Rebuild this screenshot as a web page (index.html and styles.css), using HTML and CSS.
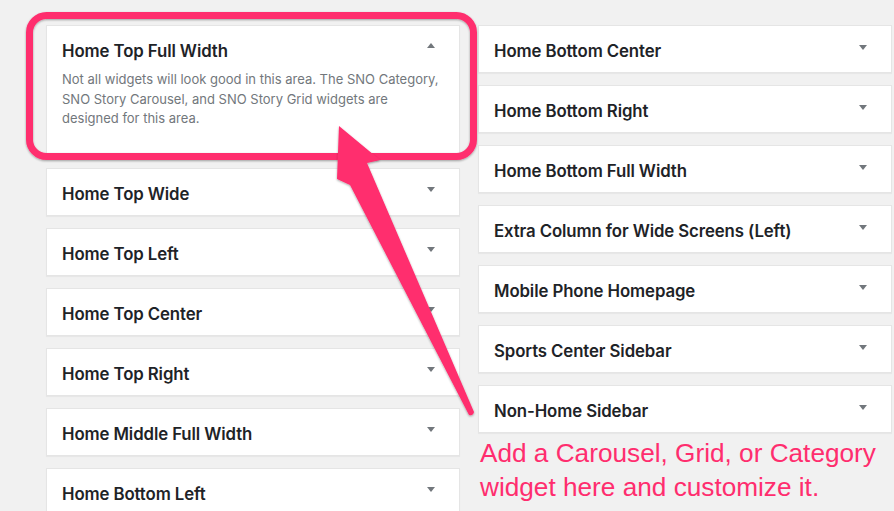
FILE: index.html
```html
<!DOCTYPE html>
<html>
<head>
    <title>Widget Areas</title>
    <meta charset="utf-8">
    <link rel="stylesheet" href="styles.css">
</head>
<body>
<div class="page">
    <div class="col">
        <div class="widget open">
            <div class="widget-top">
                <h3>Home Top Full Width</h3>
                <span class="toggle up"></span>
            </div>
            <p class="desc">Not all widgets will look good in this area. The SNO Category, SNO Story Carousel, and SNO Story Grid widgets are designed for this area.</p>
        </div>
        <div class="widget"><div class="widget-top"><h3>Home Top Wide</h3><span class="toggle"></span></div></div>
        <div class="widget"><div class="widget-top"><h3>Home Top Left</h3><span class="toggle"></span></div></div>
        <div class="widget"><div class="widget-top"><h3>Home Top Center</h3><span class="toggle"></span></div></div>
        <div class="widget"><div class="widget-top"><h3>Home Top Right</h3><span class="toggle"></span></div></div>
        <div class="widget"><div class="widget-top"><h3>Home Middle Full Width</h3><span class="toggle"></span></div></div>
        <div class="widget"><div class="widget-top"><h3>Home Bottom Left</h3><span class="toggle"></span></div></div>
    </div>
    <div class="col">
        <div class="widget"><div class="widget-top"><h3>Home Bottom Center</h3><span class="toggle"></span></div></div>
        <div class="widget"><div class="widget-top"><h3>Home Bottom Right</h3><span class="toggle"></span></div></div>
        <div class="widget"><div class="widget-top"><h3>Home Bottom Full Width</h3><span class="toggle"></span></div></div>
        <div class="widget"><div class="widget-top"><h3>Extra Column for Wide Screens (Left)</h3><span class="toggle"></span></div></div>
        <div class="widget"><div class="widget-top"><h3>Mobile Phone Homepage</h3><span class="toggle"></span></div></div>
        <div class="widget"><div class="widget-top"><h3>Sports Center Sidebar</h3><span class="toggle"></span></div></div>
        <div class="widget"><div class="widget-top"><h3>Non-Home Sidebar</h3><span class="toggle"></span></div></div>
        <p class="note">Add a Carousel, Grid, or Category widget here and customize it.</p>
    </div>

    <!-- annotation drawn over the widgets -->
    <svg class="callout" width="894" height="511" viewBox="0 0 894 511">
        <defs>
            <filter id="soft" x="-20%" y="-20%" width="140%" height="140%">
                <feDropShadow dx="0" dy="1" stdDeviation="1.2" flood-color="#000" flood-opacity="0.35"/>
            </filter>
        </defs>
        <rect x="29.5" y="15.5" width="444" height="141" rx="17" fill="none" stroke="#ff2d6e" stroke-width="7" filter="url(#soft)"/>
        <path d="M339 126 L380 160 L367 163 L474 412 Q473 416 469 415 L350 185 L337 179 Z" fill="#ff2d6e" filter="url(#soft)"/>
    </svg>
</div>
</body>
</html>
```

FILE: styles.css
```css
body {
    margin: 0;
    background: #f1f1f1;
    font-family: Inter, "Liberation Sans", sans-serif;
    color: #23282d;
}

.page {
    position: relative;
    display: flex;
    gap: 18px;
    padding: 25px 0 0 46px;
    height: 486px;
    overflow: hidden;
}

.col {
    width: 414px;
    flex: none;
}

.widget {
    background: #fff;
    border: 1px solid #e5e5e5;
    box-shadow: 0 1px 1px rgba(0, 0, 0, .04);
    margin-bottom: 12px;
}

.widget-top {
    display: flex;
    align-items: center;
    justify-content: space-between;
    height: 42px;
    padding: 4px 24px 0 15px;
}

.widget-top h3 {
    margin: 0;
    font-size: 16.8px;
    font-weight: 600;
    letter-spacing: -0.1px;
    color: #1e2327;
}

.toggle {
    width: 0;
    height: 0;
    border-left: 4px solid transparent;
    border-right: 4px solid transparent;
    border-top: 5px solid #72777c;
    margin-top: -8px;
}

.toggle.up {
    border-top: 0;
    border-bottom: 5px solid #72777c;
    margin-top: -12px;
}

.open {
    margin-bottom: 13px;
}

.open .desc {
    margin: -2px 15px 0;
    padding-bottom: 25px;
    font-size: 13px;
    line-height: 19.5px;
    color: #72777c;
}

.note {
    margin: -9px 0 0 2px;
    font-family: "Liberation Sans", Arial, sans-serif;
    font-size: 26.2px;
    line-height: 34px;
    color: #ff2d6e;
}

.callout {
    position: absolute;
    left: 0;
    top: 0;
    pointer-events: none;
}
```
